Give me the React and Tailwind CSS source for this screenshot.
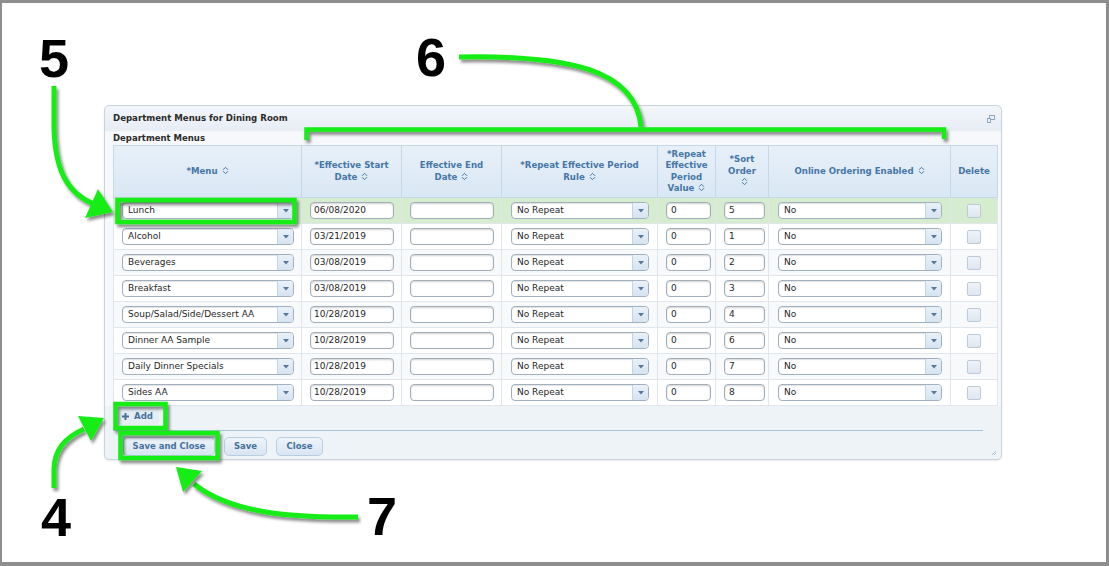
import React from 'react';

const rows = [
  { menu: 'Lunch', start: '06/08/2020', sort: '5' },
  { menu: 'Alcohol', start: '03/21/2019', sort: '1' },
  { menu: 'Beverages', start: '03/08/2019', sort: '2' },
  { menu: 'Breakfast', start: '03/08/2019', sort: '3' },
  { menu: 'Soup/Salad/Side/Dessert AA', start: '10/28/2019', sort: '4' },
  { menu: 'Dinner AA Sample', start: '10/28/2019', sort: '6' },
  { menu: 'Daily Dinner Specials', start: '10/28/2019', sort: '7' },
  { menu: 'Sides AA', start: '10/28/2019', sort: '8' },
];

const SortIcon = () => (
  <svg width="7" height="9" viewBox="0 0 7 9" className="inline-block ml-[4px] align-[-1px]">
    <path d="M1 3.8 L3.5 1.3 L6 3.8 M1 5.2 L3.5 7.7 L6 5.2" fill="none" stroke="currentColor" strokeWidth="1" />
  </svg>
);

const Select = ({ w, value }) => (
  <div className={`flex h-[17px] items-stretch overflow-hidden rounded-[4px] border border-[#a1b0bf] bg-white shadow-[inset_0_1px_1px_rgba(0,0,0,0.12)] ${w}`}>
    <div className="flex-1 truncate pl-[5px] leading-[15px] text-[#1f1f1f]">{value}</div>
    <div className="flex w-[16px] items-center justify-center border-l border-[#c4d4e3] bg-gradient-to-b from-[#e9f1f9] to-[#d6e4f1]">
      <svg width="6" height="4" viewBox="0 0 6 4">
        <path d="M0 0 H6 L3 3.5 Z" fill="#56789a" />
      </svg>
    </div>
  </div>
);

const TextBox = ({ w, value, pad }) => (
  <div className={`h-[17px] rounded-[4px] border border-[#a1adb9] bg-white leading-[15px] text-[#1f1f1f] shadow-[inset_0_1px_2px_rgba(0,0,0,0.18)] ${w} ${pad}`}>
    {value}
  </div>
);

const Btn = ({ children, w }) => (
  <div className={`flex h-[19px] items-center justify-center rounded-[5px] border border-[#b9cde1] bg-gradient-to-b from-[#eef4fa] to-[#d8e5f2] font-bold text-[8.5px] text-[#46719c] ${w}`}>
    {children}
  </div>
);

const Annotations = () => (
  <svg className="pointer-events-none absolute left-0 top-0" width="1109" height="566" viewBox="0 0 1109 566">
    <defs>
      <filter id="sh" x="-20%" y="-20%" width="140%" height="140%">
        <feDropShadow dx="2" dy="3" stdDeviation="1.4" floodColor="#000" floodOpacity="0.45" />
      </filter>
    </defs>
    <g filter="url(#sh)" stroke="#16ec16" fill="none" strokeWidth="4.5">
      {/* boxes */}
      <rect x="117.5" y="200" width="177" height="22" />
      <rect x="115.5" y="404" width="50" height="24" />
      <rect x="120.5" y="433" width="97" height="25" />
      {/* bracket 6 */}
      <path d="M306.5 140 V129.5 H944 V139" />
      <path d="M459 57 C565 55 636 68 641 127" strokeWidth="5" />
      {/* arrow 5 */}
      <path d="M54 86 L54 128 C55 168 66 193 94 204" strokeWidth="5" />
      {/* arrow 4 */}
      <path d="M54 488 L54 468 C55 450 64 438 84 429" strokeWidth="5" />
      {/* arrow 7 */}
      <path d="M358 517 C282 518 228 511 194 484" strokeWidth="5" />
    </g>
    <g filter="url(#sh)" fill="#16ec16">
      <polygon points="113,212 98,189 85,218" />
      <polygon points="104,418 78,416 91,441" />
      <polygon points="176,467 202,471 183,492" />
    </g>
  </svg>
);

const Num = ({ children, cls }) => (
  <div className={`absolute font-['Liberation_Sans',Arial,sans-serif] text-[54px] font-bold leading-[54px] text-black ${cls}`}>
    {children}
  </div>
);

export default function App() {
  return (
    <div className="relative h-[566px] w-[1109px] overflow-hidden bg-white font-['DejaVu_Sans',Verdana,sans-serif] text-[9px] shadow-[inset_2px_3px_0_#8e8e8e,inset_-3px_-4px_0_#8e8e8e]">
      <div className="pl-[104px] pt-[105px]">
        <div className="relative flex h-[355px] w-[898px] flex-col rounded-[5px] border border-[#c7d3df] bg-[#eef3f8] shadow-[0_1px_2px_rgba(0,0,0,0.08)]">
          {/* title */}
          <div className="flex h-[25px] items-center justify-between rounded-t-[5px] bg-gradient-to-b from-[#f3f6fa] to-[#e6edf4] pl-[8px] pr-[6px]">
            <span className="text-[8.6px] font-bold text-[#2b2b2b]">Department Menus for Dining Room</span>
            <svg width="8" height="8" viewBox="0 0 8 8">
              <rect x="2.5" y="0.5" width="5" height="4" fill="none" stroke="#8fa8c0" strokeWidth="1" />
              <rect x="0.5" y="3.5" width="3" height="4" fill="#eef3f8" stroke="#8fa8c0" strokeWidth="1" />
            </svg>
          </div>
          <div className="flex h-[14px] items-center bg-[#f6f8fb] pl-[8px]">
            <span className="text-[8.5px] font-bold text-[#2b2b2b]">Department Menus</span>
          </div>
          {/* table */}
          <div className="bg-[#f6f8fb] pl-[8px]">
            <table className="w-[884px] table-fixed border-collapse">
              <colgroup>
                <col className="w-[188px]" />
                <col className="w-[100px]" />
                <col className="w-[100px]" />
                <col className="w-[156px]" />
                <col className="w-[58px]" />
                <col className="w-[53px]" />
                <col className="w-[182px]" />
                <col className="w-[47px]" />
              </colgroup>
              <thead>
                <tr className="h-[52px] bg-gradient-to-b from-[#e7f0f9] to-[#d9e7f4] text-center font-bold text-[8.6px] leading-[11.5px] text-[#4676a6]">
                  <th className="border border-[#c6d7e7] font-bold">*Menu<SortIcon /></th>
                  <th className="border border-[#c6d7e7] font-bold">*Effective Start<br />Date<SortIcon /></th>
                  <th className="border border-[#c6d7e7] font-bold">Effective End<br />Date<SortIcon /></th>
                  <th className="border border-[#c6d7e7] font-bold">*Repeat Effective Period<br />Rule<SortIcon /></th>
                  <th className="border border-[#c6d7e7] font-bold">*Repeat<br />Effective<br />Period<br />Value<SortIcon /></th>
                  <th className="border border-[#c6d7e7] font-bold">*Sort<br />Order<br /><SortIcon /></th>
                  <th className="border border-[#c6d7e7] font-bold">Online Ordering Enabled<SortIcon /></th>
                  <th className="border border-[#c6d7e7] font-bold">Delete</th>
                </tr>
              </thead>
              <tbody>
                {rows.map((r, i) => (
                  <tr
                    key={r.menu}
                    className={`h-[26px] ${i === 0 ? 'bg-[#d5ecce]' : i % 2 === 1 ? 'bg-white' : 'bg-[#f7f9fb]'}`}
                  >
                    <td className="border border-[#e0e6ec] pl-[8px]">
                      <Select w="w-[172px]" value={r.menu} />
                    </td>
                    <td className="border border-[#e0e6ec] pl-[8px]">
                      <TextBox w="w-[84px]" pad="pl-[3px]" value={r.start} />
                    </td>
                    <td className="border border-[#e0e6ec] pl-[8px]">
                      <TextBox w="w-[84px]" pad="pl-[3px]" value="" />
                    </td>
                    <td className="border border-[#e0e6ec] pl-[9px]">
                      <Select w="w-[138px]" value="No Repeat" />
                    </td>
                    <td className="border border-[#e0e6ec] pl-[8px]">
                      <TextBox w="w-[45px]" pad="pl-[4px]" value="0" />
                    </td>
                    <td className="border border-[#e0e6ec] pl-[8px]">
                      <TextBox w="w-[41px]" pad="pl-[4px]" value={r.sort} />
                    </td>
                    <td className="border border-[#e0e6ec] pl-[9px]">
                      <Select w="w-[164px]" value="No" />
                    </td>
                    <td className="border border-[#e0e6ec]">
                      <div className="mx-auto h-[14px] w-[14px] rounded-[2px] border border-[#bccbd9] bg-gradient-to-b from-[#f0f4f9] to-[#dde6ef]" />
                    </td>
                  </tr>
                ))}
              </tbody>
            </table>
          </div>
          {/* add */}
          <div className="flex h-[24px] items-start pl-[11px] pt-[1px]">
            <div className="flex h-[18px] items-center gap-[5px] rounded-[3px] bg-[#e5edf5] px-[6px] font-bold text-[8.6px] text-[#46719c]">
              <svg width="7" height="7" viewBox="0 0 7 7">
                <path d="M3.5 0 V7 M0 3.5 H7" stroke="#46719c" strokeWidth="2" />
              </svg>
              Add
            </div>
          </div>
          <div className="ml-[8px] h-px w-[870px] bg-[#a9c3db]" />
          <div className="flex gap-[9px] pl-[18px] pt-[6px]">
            <Btn w="w-[92px]">Save and Close</Btn>
            <Btn w="w-[43px]">Save</Btn>
            <Btn w="w-[47px]">Close</Btn>
          </div>
          <svg className="absolute bottom-[3px] right-[4px]" width="6" height="6" viewBox="0 0 6 6">
            <path d="M5 1 L1 5 M5 3 L3 5" stroke="#9fb3c7" strokeWidth="0.8" />
          </svg>
        </div>
      </div>

      <Annotations />
      <Num cls="left-[39px] top-[31px]">5</Num>
      <Num cls="left-[416px] top-[30px]">6</Num>
      <Num cls="left-[41px] top-[490px]">4</Num>
      <Num cls="left-[367px] top-[489px]">7</Num>
    </div>
  );
}
